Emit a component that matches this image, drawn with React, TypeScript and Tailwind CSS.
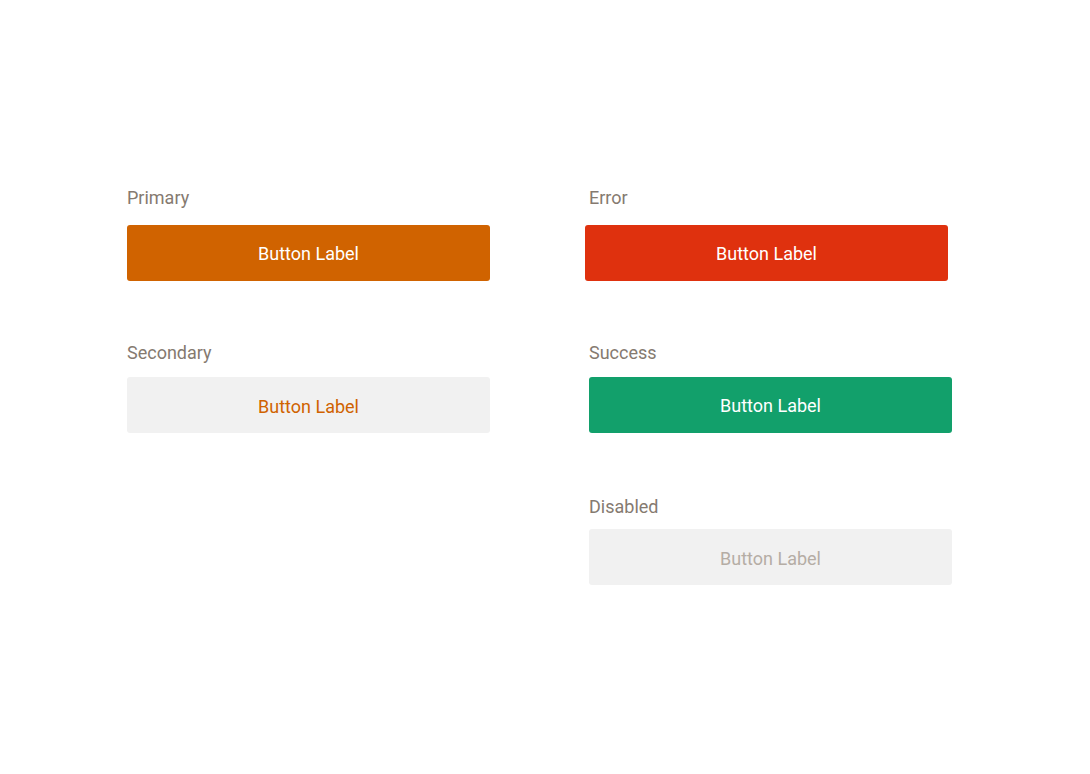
export default function App() {
  return (
    <div className="min-h-[774px] w-full bg-white font-['Roboto',sans-serif]">
      <div className="flex gap-[99px] pl-[127px] pt-[186px]">
        {/* Left column */}
        <div className="flex w-[363px] flex-col">
          <p className="text-[18px] leading-[24px] text-[#857a70]">Primary</p>
          <button className="mt-[15px] h-[56px] w-full rounded-[3px] bg-[#d06300] text-[18px] text-white">
            Button Label
          </button>

          <p className="mt-[60px] text-[18px] leading-[24px] text-[#857a70]">Secondary</p>
          <button className="mt-[12px] h-[56px] w-full rounded-[3px] bg-[#f1f1f1] pt-[2px] text-[18px] text-[#d06300]">
            Button Label
          </button>
        </div>

        {/* Right column */}
        <div className="flex w-[363px] flex-col">
          <p className="text-[18px] leading-[24px] text-[#857a70]">Error</p>
          <button className="-ml-1 mt-[15px] h-[56px] w-full rounded-[3px] bg-[#df310e] text-[18px] text-white">
            Button Label
          </button>

          <p className="mt-[60px] text-[18px] leading-[24px] text-[#857a70]">Success</p>
          <button className="mt-[12px] h-[56px] w-full rounded-[3px] bg-[#12a06b] text-[18px] text-white">
            Button Label
          </button>

          <p className="mt-[62px] text-[18px] leading-[24px] text-[#857a70]">Disabled</p>
          <button
            disabled
            className="mt-[10px] h-[56px] w-full rounded-[3px] bg-[#f1f1f1] pt-[2px] text-[18px] text-[#b5ada5]"
          >
            Button Label
          </button>
        </div>
      </div>
    </div>
  )
}
